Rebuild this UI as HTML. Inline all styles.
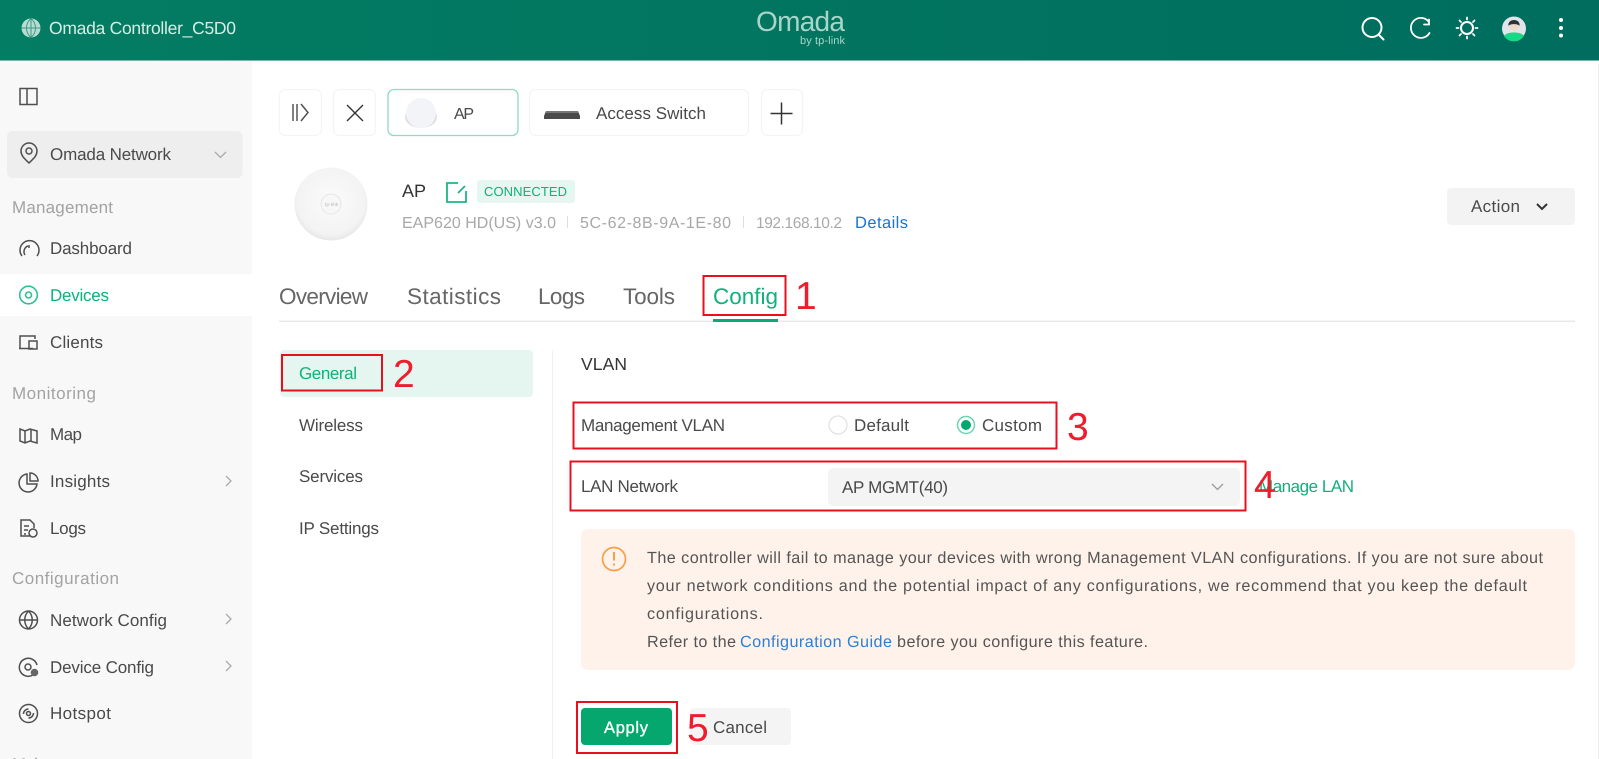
<!DOCTYPE html>
<html><head><meta charset="utf-8"><title>Omada Controller</title>
<style>
html,body{margin:0;padding:0;background:#fff;width:1599px;height:759px;overflow:hidden}
svg{display:block;filter:blur(.35px)}
text{font-family:"Liberation Sans",sans-serif;font-size:17px;fill:#4a4a4a;text-rendering:geometricPrecision}
.h{fill:#a3a3a3}
.g{fill:#0fb27c}
.s{fill:#a8a8a8;font-size:16px}
.t{font-size:22.5px;fill:#666}
.r{fill:#ee1c2c;font-size:39px}
.w{font-size:16.2px;fill:#555}
.b{fill:#2d80d8}
.i{fill:none;stroke:#4f4f4f;stroke-width:1.5}
.bx{fill:none;stroke:#e8101f;stroke-width:2}
.tb{fill:#fff;stroke:#f4f4f4;stroke-width:1.2}
</style></head><body>
<svg width="1599" height="759" viewBox="0 0 1599 759" xmlns="http://www.w3.org/2000/svg">
<defs>
<linearGradient id="hd" x1="0" y1="0" x2="1" y2="0"><stop offset="0" stop-color="#037d63"/><stop offset="1" stop-color="#006d5e"/></linearGradient>
<radialGradient id="ap" cx=".5" cy=".45" r=".55"><stop offset="0" stop-color="#fbfbfb"/><stop offset=".85" stop-color="#f3f3f3"/><stop offset="1" stop-color="#e6e6e6"/></radialGradient>
</defs>

<!-- header -->
<rect width="1599" height="60" fill="url(#hd)"/>
<rect y="60" width="1599" height="1" fill="#7fb5a8"/>
<circle cx="31" cy="28" r="9.500" fill="#b9dcd2"/>
<path d="M31 18.500v19M21.500 28h19M31 18.500c-6 5-6 14 0 19M31 18.500c6 5 6 14 0 19" fill="none" stroke="#3c9a84" stroke-width="1"/>
<text x="49" y="34" textLength="187" lengthAdjust="spacing" style="fill:#d8ece6;font-size:17.500px">Omada Controller_C5D0</text>
<text x="756" y="31" textLength="89" lengthAdjust="spacing" style="fill:#a9d5c9;font-size:28px">Omada</text>
<text x="800" y="44" textLength="45" lengthAdjust="spacing" style="fill:#a9d5c9;font-size:11px">by tp-link</text>
<g fill="none" stroke="#fff" stroke-width="2" stroke-linecap="round">
<circle cx="1372" cy="27.500" r="9.500"/><path d="M1379 35l4.500 4.500"/>
<path d="M1429 22a10 10 0 1 0 .5 11M1429 19.500v5h-5" stroke-width="1.800"/>
<circle cx="1467" cy="28" r="6"/>
<path d="M1467 17.500v2M1467 36.500v2M1456.500 28h2M1475.500 28h2M1459.500 20.500l1.500 1.500M1473 34l1.500 1.500M1459.500 35.500l1.500-1.500M1473 22l1.500-1.500" stroke-width="1.800"/>
</g>
<circle cx="1514" cy="28.500" r="12" fill="#dfe5e8"/>
<path d="M1504 36c2-3 6-3.500 10-3.500s8 .5 10 3.500a12 12 0 0 1-20 0z" fill="#17d985"/>
<circle cx="1514" cy="26" r="4.800" fill="#f0d9cb"/>
<path d="M1508.500 26c-1.500-8 12.500-8 11 0-1-2.500-10-2.500-11 0z" fill="#2a3338"/>
<circle cx="1561" cy="20" r="2" fill="#fff"/><circle cx="1561" cy="28" r="2" fill="#fff"/><circle cx="1561" cy="35.500" r="2" fill="#fff"/>

<!-- sidebar -->
<rect y="61" width="252" height="698" fill="#f8f8f8"/>
<rect x="20" y="88.500" width="17" height="16" class="i"/><path d="M27 88.500v16" class="i"/>
<rect x="7" y="131" width="235.500" height="47" rx="5" fill="#eeeeee"/>
<path d="M29 163c-4-4-8-7-8-12a8 8 0 0 1 16 0c0 5-4 8-8 12z" class="i"/><circle cx="29" cy="151" r="3" class="i"/>
<text x="50" y="160" textLength="121">Omada Network</text>
<path d="M215 152l5.500 5.500 5.500-5.500" fill="none" stroke="#aaa" stroke-width="1.300"/>
<text x="12" y="213" textLength="101" class="h">Management</text>
<path d="M22 256a9.500 9.500 0 1 1 15 0M25 255a6 6 0 0 1 3-9M29 245v3" class="i"/>
<text x="50" y="254" textLength="82">Dashboard</text>
<rect y="274" width="252" height="42" fill="#fff"/>
<circle cx="28.500" cy="295" r="8.800" fill="none" stroke="#2fc095" stroke-width="1.600"/><circle cx="28.500" cy="295" r="3" fill="none" stroke="#2fc095" stroke-width="1.600"/>
<text x="50" y="301" textLength="59" class="g">Devices</text>
<path d="M20 348v-12h15v3M19 348.500h14" class="i"/><rect x="29" y="341" width="8" height="8" class="i"/>
<text x="50" y="348" textLength="53">Clients</text>
<text x="12" y="399" textLength="84" class="h">Monitoring</text>
<path d="M20 429l5 2 5-2 7 2v12l-7-2-5 2-5-2zM25 431v12M31 429v12" class="i"/>
<text x="50" y="440" textLength="32">Map</text>
<path d="M27 474a9 9 0 1 0 10 10H27zM30 473a8 8 0 0 1 8 8h-8z" class="i"/>
<text x="50" y="487" textLength="60">Insights</text>
<path d="M226 476l5 5-5 5M226 614l5 5-5 5M226 661l5 5-5 5" fill="none" stroke="#aaa" stroke-width="1.300"/>
<path d="M30 536h-9v-16h9l4 4v4M24 526h5M24 530h4M24 534h2" class="i"/><circle cx="33" cy="533" r="4" class="i"/>
<text x="50" y="534" textLength="36">Logs</text>
<text x="12" y="584" textLength="107" class="h">Configuration</text>
<circle cx="28.500" cy="620" r="9" class="i"/><path d="M19.500 620h18M28.500 611c-5 5-5 13 0 18M28.500 611c5 5 5 13 0 18" class="i"/>
<text x="50" y="626" textLength="117">Network Config</text>
<path d="M33 675a9 9 0 1 1 4-10" class="i"/><circle cx="28" cy="667" r="3" class="i"/><circle cx="34.500" cy="672.500" r="3.800" fill="#666"/>
<text x="50" y="673" textLength="104">Device Config</text>
<circle cx="28.500" cy="713.500" r="9" class="i"/><circle cx="28.500" cy="713.500" r="2" class="i"/><path d="M23.500 714a5 5 0 0 1 5-5M33.500 713a5 5 0 0 1-5 5" class="i"/>
<text x="50" y="719" textLength="61">Hotspot</text>
<text x="12" y="770" textLength="90" class="h">Maintenance</text>

<!-- toolbar -->
<rect x="279.500" y="89.500" width="42" height="46" rx="6" class="tb"/>
<path d="M293 104v17M297 104v17M301 104l7 8.500-7 8.500" fill="none" stroke="#4a4a4a" stroke-width="1.400"/>
<rect x="333.500" y="89.500" width="42" height="46" rx="6" class="tb"/>
<path d="M347 105l16 16M363 105l-16 16" fill="none" stroke="#333" stroke-width="1.400"/>
<rect x="388" y="89.500" width="130" height="46" rx="6" fill="#fff" stroke="#8edcc0" stroke-width="1.300"/>
<ellipse cx="421" cy="117" rx="16" ry="11" fill="#dfdfdf"/><circle cx="421" cy="113" r="15" fill="#f3f4f7"/>
<text x="454" y="119" textLength="20" style="font-size:16px">AP</text>
<rect x="529.500" y="89.500" width="219" height="46" rx="6" class="tb"/>
<path d="M544 116l2-5h32l2 5v3h-36z" fill="#4a4a4a"/><rect x="546" y="111" width="32" height="2" fill="#777"/>
<text x="596" y="119" textLength="110">Access Switch</text>
<rect x="761.500" y="89.500" width="41" height="46" rx="6" class="tb"/>
<path d="M781.500 102.500v22M770.500 113.500h22" stroke="#333" stroke-width="1.500"/>

<!-- device header -->
<circle cx="331" cy="204" r="36.500" fill="url(#ap)"/>
<circle cx="331" cy="204" r="10" fill="#f7f7f7" stroke="#e6e6e6"/>
<text x="325" y="206" style="font-size:5px;fill:#bbb">tp-link</text>
<text x="402" y="197" textLength="24" style="font-size:18px;fill:#333">AP</text>
<path d="M458 183h-11v19h19v-11M458 193l7-7" fill="none" stroke="#1fb585" stroke-width="1.800"/>
<rect x="477" y="180" width="98" height="23" rx="3" fill="#e7f6f1"/>
<text x="484" y="196" textLength="83" class="g" style="font-size:13px">CONNECTED</text>
<text x="402" y="228" textLength="154" class="s">EAP620 HD(US) v3.0</text>
<rect x="567" y="216" width="1" height="12" fill="#dedede"/>
<text x="580" y="228" textLength="151" class="s">5C-62-8B-9A-1E-80</text>
<rect x="743" y="216" width="1" height="12" fill="#dedede"/>
<text x="756" y="228" textLength="86" class="s" style="font-size:15.500px">192.168.10.2</text>
<text x="855" y="228" textLength="53" style="fill:#1a74d2;font-size:16.500px">Details</text>
<rect x="1447" y="188" width="128" height="37" rx="4" fill="#f3f3f3"/>
<text x="1471" y="212" textLength="49">Action</text>
<path d="M1537 204l5 5 5-5" fill="none" stroke="#333" stroke-width="2"/>

<!-- tabs -->
<rect x="279" y="320.500" width="1296" height="1.500" fill="#e8e8e8"/>
<text x="279" y="304" textLength="89" class="t">Overview</text>
<text x="407" y="304" textLength="94" class="t">Statistics</text>
<text x="538" y="304" textLength="47" class="t">Logs</text>
<text x="623" y="304" textLength="52" class="t">Tools</text>
<text x="713" y="304" textLength="65" class="t" style="fill:#0fb27c">Config</text>
<rect x="713" y="319" width="65" height="3" fill="#0fa873"/>
<rect x="703.500" y="276" width="82" height="39" class="bx"/>
<text x="795" y="309" class="r" textLength="20">1</text>

<!-- left menu -->
<rect x="280" y="350" width="253" height="47" rx="4" fill="#e5f6f0"/>
<text x="299" y="379" textLength="58" class="g">General</text>
<rect x="282" y="355" width="100" height="35.500" class="bx"/>
<text x="393" y="387" class="r" textLength="21">2</text>
<text x="299" y="431" textLength="64">Wireless</text>
<text x="299" y="482" textLength="64">Services</text>
<text x="299" y="534" textLength="80">IP Settings</text>
<rect x="552" y="350" width="1" height="409" fill="#f0f0f0"/>

<!-- form -->
<text x="581" y="370" textLength="46" style="font-size:17.500px;fill:#333">VLAN</text>
<rect x="573.500" y="402.500" width="483" height="46" class="bx"/>
<text x="581" y="431" textLength="144">Management VLAN</text>
<circle cx="838" cy="425" r="9" fill="#fff" stroke="#e2e2e2" stroke-width="1.300"/>
<text x="854" y="431" textLength="55">Default</text>
<circle cx="966" cy="425" r="8.500" fill="#fff" stroke="#6fd3b2" stroke-width="1.500"/><circle cx="966" cy="425" r="5" fill="#00a870"/>
<text x="982" y="431" textLength="60">Custom</text>
<text x="1067" y="440" class="r" textLength="22">3</text>
<rect x="570.500" y="461.500" width="675" height="49" class="bx"/>
<text x="581" y="492" textLength="97">LAN Network</text>
<rect x="828" y="468" width="412" height="38" rx="5" fill="#f4f4f4"/>
<text x="842" y="493" textLength="106">AP MGMT(40)</text>
<path d="M1212 484l5.500 5.500 5.500-5.500" fill="none" stroke="#9a9a9a" stroke-width="1.300"/>
<text x="1259" y="492" textLength="95" style="fill:#14ae7c">Manage LAN</text>
<text x="1254" y="498" class="r" textLength="24">4</text>

<!-- warning -->
<rect x="581" y="529" width="994" height="141" rx="7" fill="#fef2ea"/>
<circle cx="614" cy="559" r="11.500" fill="none" stroke="#fa9e47" stroke-width="1.700"/>
<path d="M614 552v8.500M614 563.500v2" stroke="#fa9e47" stroke-width="2"/>
<text x="647" y="563" textLength="896" class="w">The controller will fail to manage your devices with wrong Management VLAN configurations. If you are not sure about</text>
<text x="647" y="591" textLength="880" class="w">your network conditions and the potential impact of any configurations, we recommend that you keep the default</text>
<text x="647" y="619" textLength="116" class="w">configurations.</text>
<text x="647" y="647" textLength="89" class="w">Refer to the</text>
<text x="740" y="647" textLength="152" class="w b">Configuration Guide</text>
<text x="897" y="647" textLength="251" class="w">before you configure this feature.</text>

<!-- buttons -->
<rect x="690" y="708" width="101" height="37" rx="4" fill="#f4f4f4"/>
<rect x="581" y="708" width="91" height="37" rx="4" fill="#05a76f"/>
<text x="604" y="733" textLength="44" style="fill:#fff;font-size:16.500px;stroke:#fff;stroke-width:.35px">Apply</text>
<text x="713" y="733" textLength="54">Cancel</text>
<rect x="577" y="702" width="100" height="51" class="bx"/>
<text x="687" y="741" class="r" textLength="23">5</text>
<rect x="1598" y="64" width="1" height="695" fill="#eeeeee"/>
</svg>
</body></html>
